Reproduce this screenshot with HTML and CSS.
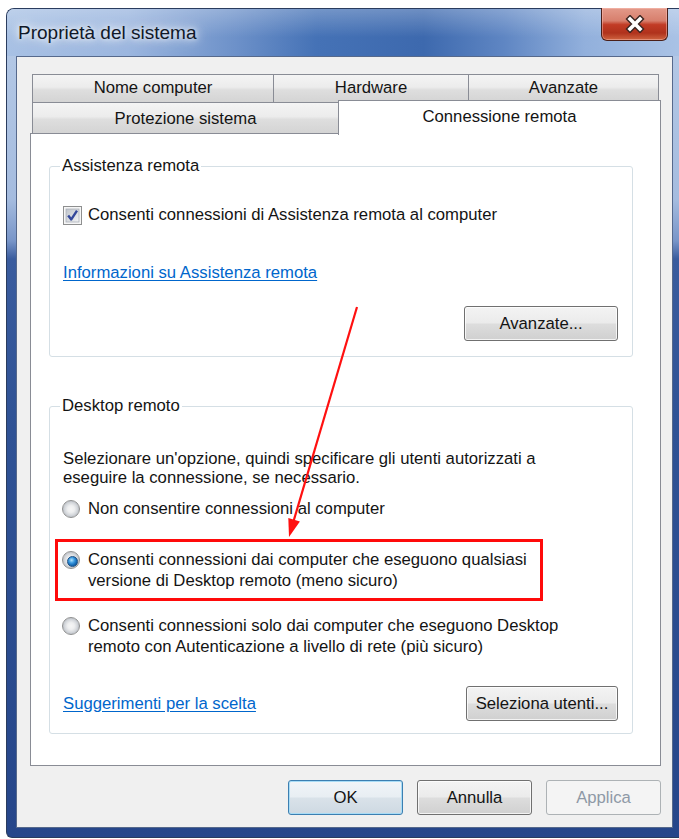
FILE: index.html
```html
<!DOCTYPE html>
<html lang="it">
<head>
<meta charset="utf-8">
<title>Proprietà del sistema</title>
<link rel="stylesheet" href="styles.css">
</head>
<body>
<div class="window">
  <div class="titlebar">
    <span class="title">Proprietà del sistema</span>
    <button class="close" type="button" aria-label="Chiudi">
      <svg width="22" height="18" viewBox="0 0 22 18">
        <path d="M6 4 L16 14 M16 4 L6 14" stroke="#3b2622" stroke-width="6.4" stroke-linecap="square" fill="none"/>
        <path d="M6 4 L16 14 M16 4 L6 14" stroke="#ffffff" stroke-width="3.6" stroke-linecap="square" fill="none"/>
      </svg>
    </button>
  </div>

  <div class="client">
    <div class="tabs">
      <div class="tab-row back">
        <div class="tab tab-nome">Nome computer</div>
        <div class="tab tab-hw">Hardware</div>
        <div class="tab tab-adv">Avanzate</div>
      </div>
      <div class="tab-row front">
        <div class="tab tab-prot">Protezione sistema</div>
        <div class="tab tab-sel">Connessione remota</div>
      </div>
    </div>

    <div class="panel">
      <fieldset class="group group-assist">
        <legend>Assistenza remota</legend>
        <label class="check-row">
          <svg class="checkbox" width="19" height="19" viewBox="0 0 19 19">
            <defs>
              <linearGradient id="chk-fill" x1="0" y1="0" x2="1" y2="1">
                <stop offset="0" stop-color="#bfc4cb"/>
                <stop offset="1" stop-color="#f2f3f4"/>
              </linearGradient>
            </defs>
            <rect x="0.5" y="0.5" width="18" height="18" fill="#f6f6f6" stroke="#8e8f8f"/>
            <rect x="3" y="3" width="13" height="13" fill="url(#chk-fill)" stroke="#aab0b8" stroke-width="0.8"/>
            <path d="M5.2 9.4 L8.3 13.4 L14 4.6" fill="none" stroke="#34489a" stroke-width="2.4" stroke-linejoin="round"/>
          </svg>
          <span>Consenti connessioni di Assistenza remota al computer</span>
        </label>
        <a class="link link-info" href="#">Informazioni su Assistenza remota</a>
        <div class="group-actions">
          <button class="btn btn-adv" type="button">Avanzate...</button>
        </div>
      </fieldset>

      <fieldset class="group group-desktop">
        <legend>Desktop remoto</legend>
        <p class="desc">Selezionare un'opzione, quindi specificare gli utenti autorizzati a<br>eseguire la connessione, se necessario.</p>
        <label class="radio-row opt-none">
          <span class="radio"></span>
          <span>Non consentire connessioni al computer</span>
        </label>
        <label class="radio-row opt-any">
          <span class="radio checked"></span>
          <span>Consenti connessioni dai computer che eseguono qualsiasi<br>versione di Desktop remoto (meno sicuro)</span>
        </label>
        <label class="radio-row opt-nla">
          <span class="radio"></span>
          <span>Consenti connessioni solo dai computer che eseguono Desktop<br>remoto con Autenticazione a livello di rete (più sicuro)</span>
        </label>
        <div class="group-footer">
          <a class="link" href="#">Suggerimenti per la scelta</a>
          <button class="btn btn-users" type="button">Seleziona utenti...</button>
        </div>
      </fieldset>
    </div>

    <div class="dialog-buttons">
      <button class="btn btn-default" type="button">OK</button>
      <button class="btn" type="button">Annulla</button>
      <button class="btn" type="button" disabled>Applica</button>
    </div>
  </div>
</div>

<div class="callout-box"></div>
<svg class="callout-arrow" width="679" height="839" viewBox="0 0 679 839">
  <line x1="357" y1="307" x2="293" y2="523" stroke="#ff1010" stroke-width="2.2"/>
  <polygon points="289,537 299.9,521.4 288.3,518" fill="#ff1010"/>
</svg>
</body>
</html>
```

FILE: styles.css
```css
* {
  box-sizing: border-box;
}

html,
body {
  margin: 0;
  padding: 0;
}

body {
  position: relative;
  width: 679px;
  height: 839px;
  overflow: hidden;
  background: #ffffff;
  font-family: "Liberation Sans", Arial, sans-serif;
  font-size: 16.7px;
  color: #141414;
}

/* ---------- window frame ---------- */
.window {
  display: flex;
  flex-direction: column;
  width: 673px;
  height: 830px;
  margin: 8px 0 0 6px;
  border: 1px solid #2a3c5e;
  border-right: none;
  border-radius: 8px 0 0 6px;
  background: linear-gradient(180deg,
      #b7cbe7 0px,
      #a5bcdf 190px,
      #7895c8 232px,
      #3a5c9e 250px,
      #2f5295 420px,
      #26468a 100%);
}

.titlebar {
  flex: none;
  display: flex;
  align-items: flex-start;
  height: 47px;
  padding-left: 11px;
  border-radius: 7px 0 0 0;
  background:
    linear-gradient(180deg, rgba(255, 255, 255, 0.25), rgba(255, 255, 255, 0) 60%),
    linear-gradient(90deg,
      #a8c1e4 0%,
      #9bb6df 18%,
      #6d91c9 34%,
      #4572b6 46%,
      #3d69ae 62%,
      #5f86c3 74%,
      #92b0dc 86%,
      #a9c2e5 100%);
}

.title {
  align-self: center;
  font-size: 19px;
  color: #101828;
  text-shadow:
    0 0 10px rgba(255, 255, 255, 0.95),
    0 0 16px rgba(255, 255, 255, 0.8),
    0 0 4px rgba(255, 255, 255, 0.7);
}

.close {
  display: flex;
  align-items: center;
  justify-content: center;
  width: 67px;
  height: 33px;
  margin: -1px 11px 0 auto;
  padding: 0;
  border: 1px solid #4a1f18;
  border-top: none;
  border-radius: 0 0 6px 6px;
  background: linear-gradient(180deg,
      #e39a8a 0%,
      #d77f6d 40%,
      #c23c26 52%,
      #b0321c 78%,
      #cf6440 100%);
  box-shadow: inset 0 0 0 1px rgba(255, 200, 190, 0.45);
}

/* ---------- client area ---------- */
.client {
  flex: 1;
  min-height: 0;
  margin: 0 6px 9px 9px;
  padding: 17px 11px 0 13px;
  border: 1px solid #56698c;
  background: #f0f0f0;
}

.tab-row {
  display: flex;
}

.tab-row.back {
  height: 28px;
  margin: 0 2px;
}

.tab-row.front {
  align-items: flex-end;
  height: 31px;
  padding-left: 2px;
}

.tab {
  height: 100%;
  border: 1px solid #898c95;
  border-bottom: none;
  background: linear-gradient(180deg, #f4f4f4 0%, #ececec 45%, #dedede 55%, #d4d4d4 100%);
  text-align: center;
  line-height: 26px;
  white-space: nowrap;
}

.tab + .tab {
  margin-left: -1px;
}

.tab-nome { width: 242px; }
.tab-hw   { width: 196px; }
.tab-adv  { width: 191px; }

.tab-prot {
  width: 307px;
  padding-top: 3px;
}

.tab-sel {
  position: relative;
  z-index: 2;
  width: 323px;
  height: 35px;
  margin-bottom: -2px;
  padding-top: 3px;
  background: #ffffff;
}

.panel {
  padding: 22px 27px 31px 18px;
  border: 1px solid #898c95;
  background: #ffffff;
}

/* ---------- group boxes ---------- */
.group {
  min-width: 0;
  margin: 0;
  padding: 28px 14px 15px 13px;
  border: 1px solid #d5dfe5;
  border-radius: 3px;
}

.group legend {
  margin-left: -3px;
  padding: 0 2px;
  line-height: 20px;
}

.group-desktop {
  margin-top: 39px;
  padding-top: 33px;
  padding-bottom: 12px;
}

.check-row {
  display: flex;
  align-items: center;
  gap: 6px;
  height: 22px;
  line-height: 22px;
  white-space: nowrap;
}

.checkbox {
  flex: none;
}

.link {
  color: #0066cc;
  text-decoration: underline;
  text-underline-offset: 2px;
  line-height: 22px;
  white-space: nowrap;
}

.link-info {
  display: block;
  width: fit-content;
  margin-top: 36px;
}

.group-actions {
  display: flex;
  justify-content: flex-end;
  margin-top: 22px;
}

.desc {
  margin: 0;
  line-height: 19px;
  white-space: nowrap;
}

.radio-row {
  display: flex;
  align-items: flex-start;
  gap: 8px;
  margin-left: -1px;
  line-height: 21px;
  white-space: nowrap;
}

.opt-none { margin-top: 11px; }
.opt-any  { margin-top: 30px; }
.opt-nla  { margin-top: 24px; }

.radio {
  position: relative;
  flex: none;
  width: 18px;
  height: 18px;
  margin-top: 2px;
  border: 1px solid #8e8f8f;
  border-radius: 50%;
  background: radial-gradient(circle at 50% 50%,
      #f6f6f6 0,
      #eeeff0 30%,
      #d5d8dc 55%,
      #c3c7cd 68%,
      #f4f4f4 74%);
}

.radio.checked::after {
  content: "";
  position: absolute;
  left: 3.5px;
  top: 3.5px;
  width: 9px;
  height: 9px;
  border: 1px solid #1d4f82;
  border-radius: 50%;
  background: radial-gradient(circle at 40% 35%, #b6e4fb 0, #3b9ae0 35%, #1468b3 65%, #0d4a86 100%);
}

.group-footer {
  display: flex;
  justify-content: space-between;
  align-items: center;
  margin-top: 29px;
}

/* ---------- push buttons ---------- */
.btn {
  width: 115px;
  height: 35px;
  padding: 0;
  border: 1px solid #707070;
  border-radius: 3px;
  background: linear-gradient(180deg, #f3f3f3 0%, #ebebeb 48%, #dddddd 52%, #d0d0d0 100%);
  box-shadow: inset 0 0 0 1px rgba(255, 255, 255, 0.75);
  font: inherit;
  color: #141414;
  line-height: 33px;
  white-space: nowrap;
}

.btn-adv   { width: 154px; }
.btn-users { width: 152px; }

.btn-default {
  border-color: #3c7fb1;
  background: linear-gradient(180deg, #f1f5f8 0%, #e8eef3 48%, #d9e2e9 52%, #ced9e2 100%);
  box-shadow: inset 0 0 0 1px #a8dcf6;
}

.btn:disabled {
  border-color: #adb2b5;
  background: #f4f4f4;
  box-shadow: none;
  color: #8e99a6;
}

.dialog-buttons {
  display: flex;
  justify-content: flex-end;
  gap: 14px;
  margin-top: 14px;
}

/* ---------- red annotation ---------- */
.callout-box {
  position: absolute;
  left: 55px;
  top: 539px;
  width: 488px;
  height: 62px;
  border: 3px solid #ff0a0a;
}

.callout-arrow {
  position: absolute;
  left: 0;
  top: 0;
  pointer-events: none;
}
```
